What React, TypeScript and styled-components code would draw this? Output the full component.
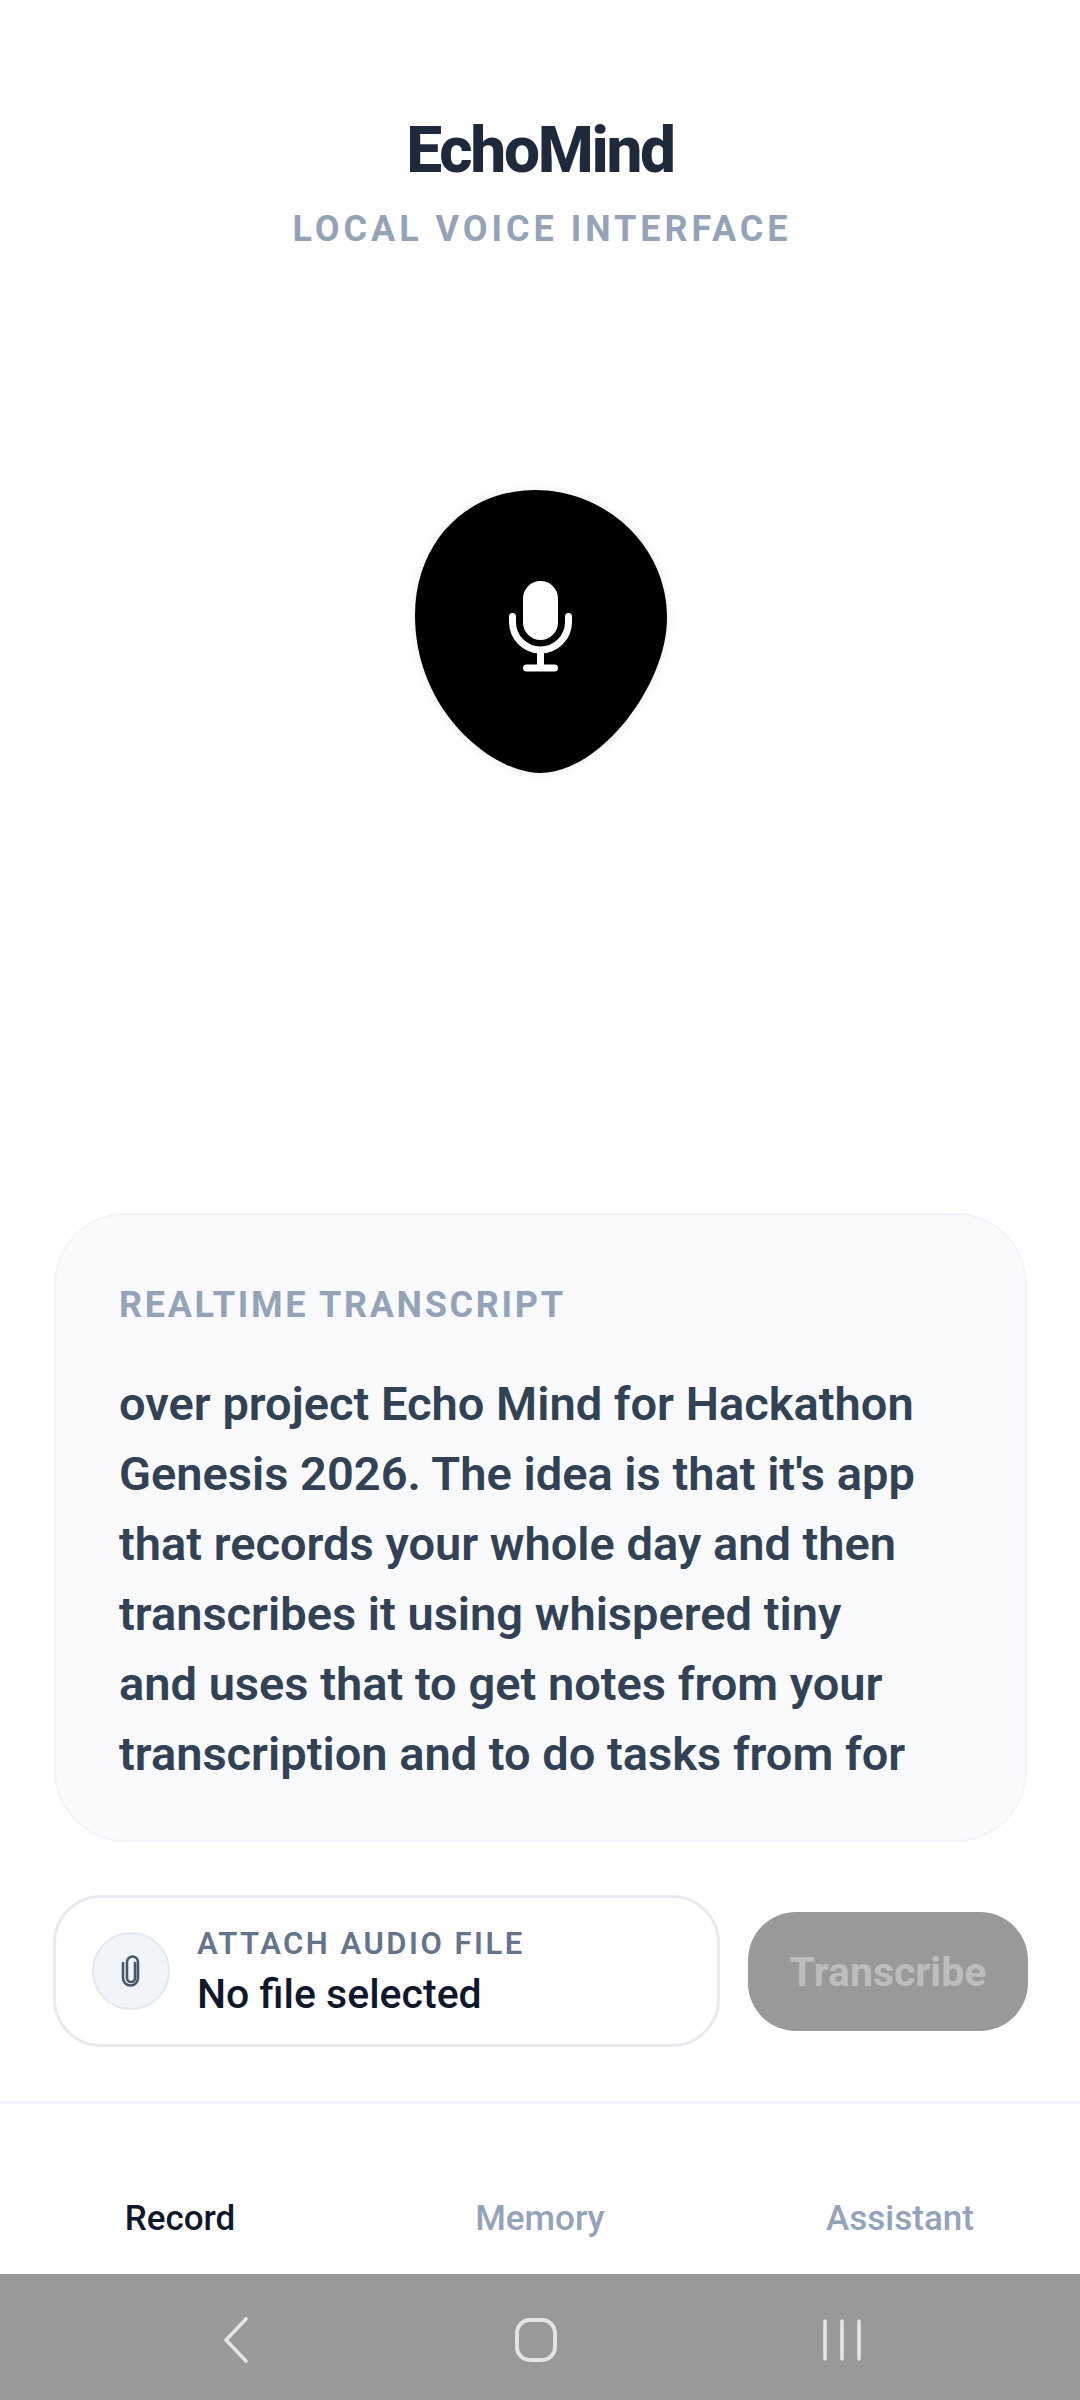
import React from 'react'
import styled, { createGlobalStyle } from 'styled-components'

const GlobalStyle = createGlobalStyle`
  html, body {
    margin: 0;
    padding: 0;
    background: #fff;
  }
  * {
    box-sizing: border-box;
  }
`

const S = {
  Page: styled.div`
    width: 1080px;
    height: 2400px;
    display: flex;
    flex-direction: column;
    background: #fff;
    font-family: Roboto, 'Liberation Sans', sans-serif;
  `,

  Header: styled.header`
    display: flex;
    flex-direction: column;
    align-items: center;
    padding-top: 113px;
  `,

  Title: styled.h1`
    margin: 0;
    font-size: 64px;
    line-height: 76px;
    font-weight: 800;
    letter-spacing: -2.3px;
    color: #1e293b;
  `,

  Subtitle: styled.div`
    margin: 19px 0 0 4px;
    font-size: 36px;
    line-height: 42px;
    font-weight: 700;
    letter-spacing: 3.95px;
    color: #94a3b8;
  `,

  Stage: styled.div`
    flex: 1;
    display: flex;
    justify-content: center;
    padding-top: 240px;
  `,

  BlobWrap: styled.div`
    filter: drop-shadow(0 0 4px rgba(15, 23, 42, 0.1));
    width: 252px;
    height: 283px;
    margin-left: 2px;
  `,

  Blob: styled.button`
    width: 252px;
    height: 283px;
    border: none;
    padding: 0 2px 11px 0;
    background: #000;
    display: flex;
    align-items: center;
    justify-content: center;
    clip-path: path('M120 0C190 0 252 55 252 128C252 195 185 283 125 283C78 283 0 222 0 125C0 52 52 0 120 0Z');
  `,

  Transcript: styled.section`
    margin: 0 53px 0 54px;
    height: 629px;
    padding: 69px 63px 0;
    background: #f8fafc;
    border: 2px solid #f1f5f9;
    border-radius: 72px;
    overflow: hidden;
  `,

  TranscriptLabel: styled.div`
    font-size: 36px;
    line-height: 42px;
    font-weight: 700;
    letter-spacing: 2.7px;
    color: #94a3b8;
  `,

  TranscriptText: styled.p`
    margin: 43px 0 0;
    font-size: 47px;
    line-height: 70px;
    font-weight: 600;
    color: #334155;
    white-space: pre-line;
  `,

  Actions: styled.div`
    display: flex;
    align-items: center;
    gap: 28px;
    margin: 53px 52px 0 53px;
  `,

  Attach: styled.div`
    flex: 1;
    height: 152px;
    display: flex;
    align-items: center;
    gap: 27px;
    padding-left: 36px;
    background: #fff;
    border: 3px solid #e7ebf0;
    border-radius: 48px;
  `,

  ClipCircle: styled.div`
    width: 78px;
    height: 78px;
    display: flex;
    align-items: center;
    justify-content: center;
    flex-shrink: 0;
    border-radius: 50%;
    background: #f1f5f9;
    border: 2px solid #e2e8f0;
  `,

  AttachText: styled.div`
    display: flex;
    flex-direction: column;
    gap: 8px;
    padding-top: 2px;
  `,

  AttachLabel: styled.div`
    font-size: 31px;
    line-height: 36px;
    font-weight: 600;
    letter-spacing: 2.5px;
    color: #64748b;
  `,

  AttachValue: styled.div`
    font-size: 41px;
    line-height: 48px;
    font-weight: 500;
    color: #0f172a;
  `,

  TranscribeButton: styled.button`
    width: 280px;
    height: 119px;
    border: none;
    padding: 2px 0 0;
    border-radius: 48px;
    background: #999;
    color: #bdbdbd;
    font-family: inherit;
    font-size: 41px;
    font-weight: 700;
  `,

  Tabs: styled.nav`
    margin-top: 54px;
    height: 173px;
    display: grid;
    grid-template-columns: repeat(3, 1fr);
    border-top: 3px solid #f1f5f9;
  `,

  Tab: styled.div<{ $active?: boolean }>`
    padding-top: 94px;
    text-align: center;
    font-size: 35px;
    line-height: 42px;
    font-weight: 500;
    color: ${(p) => (p.$active ? '#0f172a' : '#94a3b8')};
  `,

  SystemBar: styled.div`
    height: 126px;
    display: flex;
    align-items: center;
    justify-content: center;
    gap: 266px;
    padding: 6px 0 0 4px;
    background: #999;
  `,
}

const MicIcon = () => (
  <svg width="63" height="91" viewBox="0 0 63 91" fill="none">
    <rect x="14" y="0" width="35" height="59" rx="17.5" fill="#fff" />
    <path
      d="M3.5 35.5V41a28 28 0 0 0 56 0V35.5M31.5 69V87M17.5 87H45.5"
      stroke="#fff"
      strokeWidth="7"
      strokeLinecap="round"
    />
  </svg>
)

const ClipIcon = () => (
  <svg width="20" height="32" viewBox="0 0 20 32" fill="none">
    <path
      d="M14 8V23a4 4 0 0 1-8 0V7a5.5 5.5 0 0 1 11 0V23a7.5 7.5 0 0 1-15 0V8"
      stroke="#475569"
      strokeWidth="2.6"
      strokeLinecap="round"
    />
  </svg>
)

const BackIcon = () => (
  <svg width="26" height="46" viewBox="0 0 26 46" fill="none">
    <path d="M23 2L3 23L23 44" stroke="#e4e4e4" strokeWidth="3.6" strokeLinecap="round" strokeLinejoin="round" />
  </svg>
)

const HomeIcon = () => (
  <svg width="42" height="44" viewBox="0 0 42 44" fill="none">
    <rect x="2" y="2" width="38" height="40" rx="13" stroke="#e4e4e4" strokeWidth="4" />
  </svg>
)

const RecentsIcon = () => (
  <svg width="38" height="42" viewBox="0 0 38 42" fill="none">
    <path d="M2 2V40M19 2V40M36 2V40" stroke="#e4e4e4" strokeWidth="3.6" strokeLinecap="round" />
  </svg>
)

const transcript = `over project Echo Mind for Hackathon
Genesis 2026. The idea is that it's app
that records your whole day and then
transcribes it using whispered tiny
and uses that to get notes from your
transcription and to do tasks from for`

const App = () => {
  return (
    <S.Page>
      <GlobalStyle />
      <S.Header>
        <S.Title>EchoMind</S.Title>
        <S.Subtitle>LOCAL VOICE INTERFACE</S.Subtitle>
      </S.Header>
      <S.Stage>
        <S.BlobWrap>
          <S.Blob aria-label="Record">
            <MicIcon />
          </S.Blob>
        </S.BlobWrap>
      </S.Stage>
      <S.Transcript>
        <S.TranscriptLabel>REALTIME TRANSCRIPT</S.TranscriptLabel>
        <S.TranscriptText>{transcript}</S.TranscriptText>
      </S.Transcript>
      <S.Actions>
        <S.Attach>
          <S.ClipCircle>
            <ClipIcon />
          </S.ClipCircle>
          <S.AttachText>
            <S.AttachLabel>ATTACH AUDIO FILE</S.AttachLabel>
            <S.AttachValue>No file selected</S.AttachValue>
          </S.AttachText>
        </S.Attach>
        <S.TranscribeButton disabled>Transcribe</S.TranscribeButton>
      </S.Actions>
      <S.Tabs>
        <S.Tab $active>Record</S.Tab>
        <S.Tab>Memory</S.Tab>
        <S.Tab>Assistant</S.Tab>
      </S.Tabs>
      <S.SystemBar>
        <BackIcon />
        <HomeIcon />
        <RecentsIcon />
      </S.SystemBar>
    </S.Page>
  )
}

export default App
